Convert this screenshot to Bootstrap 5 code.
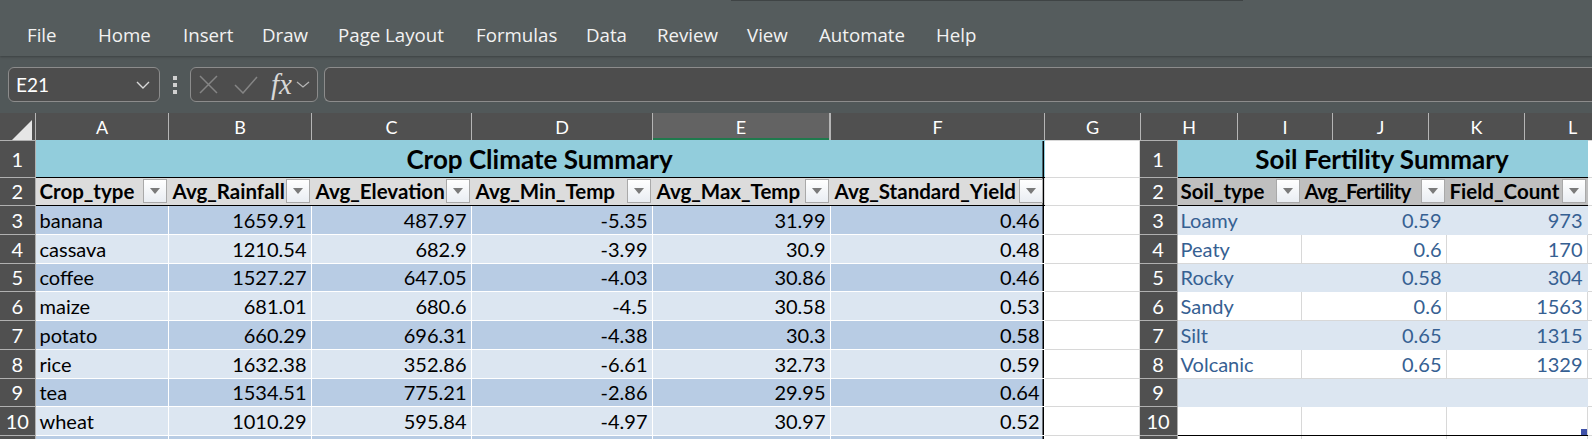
<!DOCTYPE html>
<html lang="en">
<head>
  <meta charset="UTF-8">
  <title>Crop summary</title>
  <link href="https://cdn.jsdelivr.net/npm/bootstrap@5.3.3/dist/css/bootstrap.min.css" rel="stylesheet">
  <style>
    html, body { height: 439px; overflow: hidden; background: #fff; }
    .menu-bar {
      height: 56px;
      background: #555c5d;
      box-shadow: 0 1px 2px #3c4142;
      padding: 0 0 0 27px;
      font: 18.7px "Open Sans", sans-serif;
      color: #f2f2f2;
      position: relative;
    }
    .window-edge { position: absolute; left: 731px; top: 0; width: 512px; height: 1px; background: #3f4445; }
    .menu-item { margin-top: 23px; line-height: 24px; }
    .formula-wrap { height: 57px; background: #515859; padding: 11px 0 0 8px; }
    .fx-box {
      height: 35px;
      background: #4d4d4d;
      border: 1px solid #8c8c8c;
      border-radius: 6px;
      color: #fff;
    }
    .name-box { width: 152px; padding: 0 8px 0 7px; font: 19px "Lato", sans-serif; }
    .dots { width: 30px; height: 35px; }
    .dots i { display: block; width: 4px; height: 4px; background: #d0d0d0; margin: 1.5px 0; }
    .func-box { width: 128px; padding: 0 3px 0 8px; }
    .fx-text { font: italic 29px "Liberation Serif", serif; color: #d8d8d8; margin: 0 4px 0 13px; }
    .input-box { flex: 1; margin-left: 6px; border-right: 0; border-radius: 6px 0 0 6px; }
    .col-heads { height: 27px; background: #505050; color: #fff; font: 18px "Lato", sans-serif; overflow: hidden; }
    .col-head { flex: none; text-align: center; line-height: 29px; border-left: 1px solid #b5b5b5; }
    .col-head.corner { border: 0; }
    .col-head.active { background: #636363; border-right: 1px solid #b5b5b5; box-shadow: inset 0 -2px 0 #1f7a4d; }
    .xl-grid { width: 1592px; border-collapse: collapse; table-layout: fixed; font: 20px "Lato", sans-serif; color: #000; border-top: 1px solid #b5b5b5; }
    .xl-grid td { padding: 0 4px; height: 28.75px; border: 1px solid #d8d8d8; white-space: nowrap; overflow: hidden; line-height: 1; }
    .xl-grid .row-head { background: #505050; color: #fff; text-align: center; border-color: #b0b0b0; padding: 0; border-left: 0; }
    .xl-grid .title-row td { height: 36.5px; }
    .xl-grid .title-cell { background: #92cddc; font-weight: 700; font-size: 26px; text-align: center; border-color: #92cddc; border-bottom: 1px solid #000; }
    .xl-grid .head-row td { height: 28.5px; }
    .xl-grid .head-left { background: #dcdcdc; font-weight: 700; font-size: 20.5px; border-color: #dcdcdc; border-bottom: 1.5px solid #000; padding-right: 1px; }
    .xl-grid .head-right { background: #bfbfbf; font-weight: 700; font-size: 20.5px; border-color: #bfbfbf; border-bottom: 1.5px solid #000; padding: 0 1px 0 3px; }
    .head-tight { letter-spacing: -.7px; }
    .xl-grid td.band-a { background: #b8cce4; border-color: #fff; }
    .xl-grid td.band-b { background: #dce6f1; border-color: #fff; }
    .xl-grid td.soil-a { background: #dce6f1; border-color: #dce6f1; color: #366092; padding-left: 3px; }
    .xl-grid td.soil-b { background: #fff; color: #366092; border-color: #d8d8d8; padding-left: 3px; }
    .xl-grid td.edge-r { box-shadow: inset -1.5px 0 0 #000; }
    .xl-grid td.edge-b { border-bottom: 1.5px solid #000; position: relative; }
    .xl-grid .tail-row td { height: 4px; font-size: 0; padding: 0; }
    .filter-btn {
      width: 24px; height: 24px; flex: none;
      background: linear-gradient(#fff, #e9edf2);
      border: 1px solid #a9a9a9;
      display: flex; align-items: center; justify-content: center;
    }
    .filter-btn::after { content: ""; border: 5px solid transparent; border-top: 6px solid #7a7a7a; border-bottom: 0; }
    .resize-dot { position: absolute; right: 0; bottom: 0; width: 6px; height: 6px; background: #3f51a8; }
  </style>
</head>
<body class="m-0">
  <div class="menu-bar d-flex">
    <div class="window-edge"></div>
    <div class="menu-item" style="width:71px">File</div>
    <div class="menu-item" style="width:85px">Home</div>
    <div class="menu-item" style="width:79px">Insert</div>
    <div class="menu-item" style="width:76px">Draw</div>
    <div class="menu-item" style="width:138px">Page Layout</div>
    <div class="menu-item" style="width:110px">Formulas</div>
    <div class="menu-item" style="width:71px">Data</div>
    <div class="menu-item" style="width:90px">Review</div>
    <div class="menu-item" style="width:72px">View</div>
    <div class="menu-item" style="width:117px">Automate</div>
    <div class="menu-item">Help</div>
  </div>

  <div class="formula-wrap d-flex">
    <div class="fx-box name-box d-flex align-items-center justify-content-between">
      <span>E21</span>
      <svg width="16" height="10" viewBox="0 0 16 10"><path d="M2 2l6 6 6-6" fill="none" stroke="#d8d8d8" stroke-width="1.4"/></svg>
    </div>
    <div class="dots d-flex flex-column align-items-center justify-content-center"><i></i><i></i><i></i></div>
    <div class="fx-box func-box d-flex align-items-center">
      <svg width="19" height="19" viewBox="0 0 19 19"><path d="M1 1l17 17M18 1L1 18" fill="none" stroke="#858585" stroke-width="1.5"/></svg>
      <svg class="ms-3" width="24" height="18" viewBox="0 0 24 18"><path d="M1 9l8 8L23 1" fill="none" stroke="#858585" stroke-width="1.5"/></svg>
      <span class="fx-text">fx</span>
      <svg width="14" height="9" viewBox="0 0 14 9"><path d="M1 2l6 5 6-5" fill="none" stroke="#b5b5b5" stroke-width="1.3"/></svg>
    </div>
    <div class="fx-box input-box"></div>
  </div>

  <div class="col-heads d-flex" id="colHeads"></div>
  <table class="xl-grid" id="sheet"></table>

  <script>
    const headWidths = [['', 35], ['A', 133], ['B', 143], ['C', 160], ['D', 181], ['E', 178], ['F', 214], ['G', 96], ['H', 97], ['I', 95], ['J', 96], ['K', 96], ['L', 96]];
    const colWidths = [35, 133, 143, 160, 181, 178, 214, 95, 38, 124, 145, 141, 5];
    const crops = [
      ['banana', 1659.91, 487.97, -5.35, 31.99, 0.46], ['cassava', 1210.54, 682.9, -3.99, 30.9, 0.48],
      ['coffee', 1527.27, 647.05, -4.03, 30.86, 0.46], ['maize', 681.01, 680.6, -4.5, 30.58, 0.53],
      ['potato', 660.29, 696.31, -4.38, 30.3, 0.58], ['rice', 1632.38, 352.86, -6.61, 32.73, 0.59],
      ['tea', 1534.51, 775.21, -2.86, 29.95, 0.64], ['wheat', 1010.29, 595.84, -4.97, 30.97, 0.52]
    ];
    const soils = [
      ['Loamy', 0.59, 973], ['Peaty', 0.6, 170], ['Rocky', 0.58, 304], ['Sandy', 0.6, 1563],
      ['Silt', 0.65, 1315], ['Volcanic', 0.65, 1329], ['', '', ''], ['', '', '']
    ];
    const cropHeads = ['Crop_type', 'Avg_Rainfall', 'Avg_Elevation', 'Avg_Min_Temp', 'Avg_Max_Temp', 'Avg_Standard_Yield'];
    const soilHeads = ['Soil_type', 'Avg_Fertility', 'Field_Count'];

    document.getElementById('colHeads').innerHTML = headWidths.map(([name, w]) => {
      if (!name) return `<div class="col-head corner" style="width:${w}px"><svg width="35" height="27" viewBox="0 0 35 27"><path d="M11 25L32 4v21z" fill="#e6e6e6"/></svg></div>`;
      return `<div class="col-head${name === 'E' ? ' active' : ''}" style="width:${w}px">${name}</div>`;
    }).join('');

    const headCell = (text, cls) => `<td class="${cls}"><div class="d-flex justify-content-between align-items-center"><span${text === 'Avg_Fertility' ? ' class="head-tight"' : ''}>${text}</span><span class="filter-btn"></span></div></td>`;
    let html = '<colgroup>' + colWidths.map(w => `<col style="width:${w}px">`).join('') + '</colgroup>';
    html += `<tr class="title-row"><td class="row-head">1</td><td class="title-cell edge-r" colspan="6">Crop Climate Summary</td><td></td><td class="row-head">1</td><td class="title-cell" colspan="3">Soil Fertility Summary</td><td></td></tr>`;
    html += `<tr class="head-row"><td class="row-head">2</td>` + cropHeads.map((h, i) => headCell(h, 'head-left' + (i === 5 ? ' edge-r' : ''))).join('') +
      `<td></td><td class="row-head">2</td>` + soilHeads.map(h => headCell(h, 'head-right')).join('') + `<td></td></tr>`;
    crops.forEach((c, i) => {
      const band = i % 2 ? 'band-b' : 'band-a';
      const soil = i % 2 ? 'soil-b' : 'soil-a';
      const last = i === crops.length - 1 ? ' edge-b' : '';
      html += `<tr><td class="row-head">${i + 3}</td>` +
        c.map((v, j) => `<td class="${band}${j ? ' text-end' : ''}${j === 5 ? ' edge-r' : ''}">${v}</td>`).join('') +
        `<td></td><td class="row-head">${i + 3}</td>` +
        soils[i].map((v, j) => `<td class="${soil}${j ? ' text-end' : ''}${last}">${v}${last && j === 2 ? '<span class="resize-dot"></span>' : ''}</td>`).join('') +
        `<td></td></tr>`;
    });
    html += `<tr class="tail-row"><td class="row-head"></td>` + '<td class="band-a"></td>'.repeat(5) + '<td class="band-a edge-r"></td>' + `<td></td><td class="row-head"></td>` + '<td></td>'.repeat(4) + `</tr>`;
    document.getElementById('sheet').innerHTML = html;
  </script>
  <script src="https://cdn.jsdelivr.net/npm/bootstrap@5.3.3/dist/js/bootstrap.bundle.min.js"></script>
</body>
</html>
